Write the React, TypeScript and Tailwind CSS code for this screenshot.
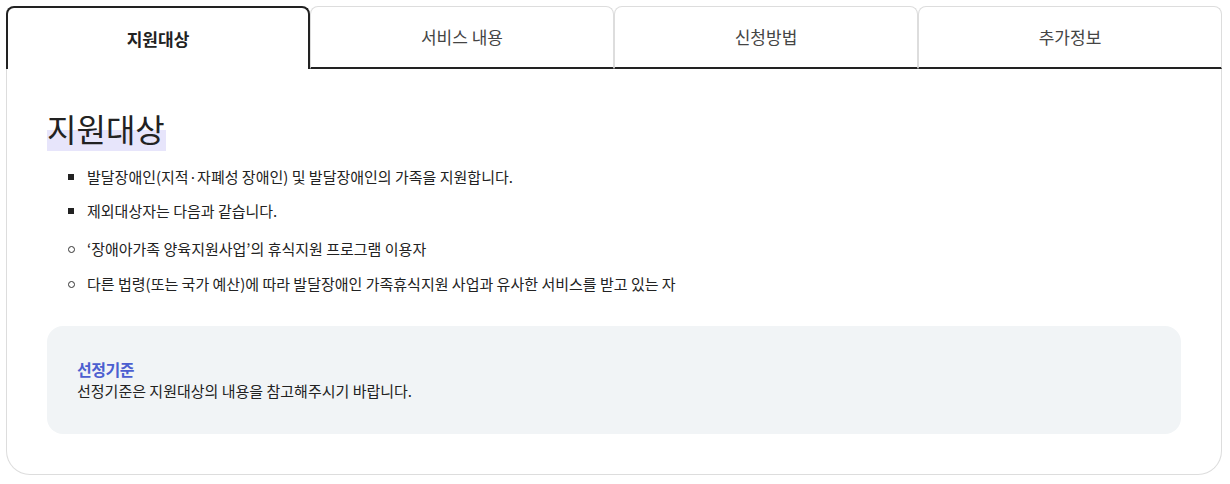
import React, { useState } from 'react';

const tabs = ['지원대상', '서비스 내용', '신청방법', '추가정보'];

const font = { fontFamily: '"Noto Sans CJK KR", "Noto Sans", sans-serif' };

const App: React.FC = () => {
  const [active, setActive] = useState(0);

  return (
    <div className="bg-white pt-[6px] pl-[6px]" style={font}>
      <div className="w-[1216px]">
        {/* tab bar */}
        <div className="grid grid-cols-4 h-[63px]">
          {tabs.map((t, i) =>
            i === active ? (
              <button
                key={t}
                onClick={() => setActive(i)}
                className="border-2 border-b-0 border-[#222] rounded-t-[8px] bg-white text-[17px] font-bold text-[#222]"
              >
                {t}
              </button>
            ) : (
              <button
                key={t}
                onClick={() => setActive(i)}
                className="border border-[#ddd] border-b-2 border-b-[#222] rounded-t-[8px] bg-white text-[17px] text-[#444]"
              >
                {t}
              </button>
            )
          )}
        </div>

        {/* panel */}
        <div className="border border-t-0 border-[#ddd] rounded-b-[24px] px-[40px] pt-[40px] pb-[40px]">
          <h2 className="text-[32px] leading-[38px] text-[#222]">
            <span className="bg-[linear-gradient(transparent_55%,#e7e5fb_55%)] pr-[1px]">지원대상</span>
          </h2>

          <ul className="mt-[19px] pl-[21px] text-[15px] text-[#222]">
            <li className="flex items-center h-[22px]">
              <span className="w-[6px] h-[6px] bg-[#222] mr-[13px] shrink-0" />
              발달장애인(지적·자폐성 장애인) 및 발달장애인의 가족을 지원합니다.
            </li>
            <li className="flex items-center h-[22px] mt-[12px]">
              <span className="w-[6px] h-[6px] bg-[#222] mr-[13px] shrink-0" />
              제외대상자는 다음과 같습니다.
            </li>
            <li className="flex items-center h-[22px] mt-[16px]">
              <span className="w-[7px] h-[7px] border border-[#333] rounded-full mr-[12px] shrink-0" />
              ‘장애아가족 양육지원사업’의 휴식지원 프로그램 이용자
            </li>
            <li className="flex items-center h-[22px] mt-[13px]">
              <span className="w-[7px] h-[7px] border border-[#333] rounded-full mr-[12px] shrink-0" />
              다른 법령(또는 국가 예산)에 따라 발달장애인 가족휴식지원 사업과 유사한 서비스를 받고 있는 자
            </li>
          </ul>

          <div className="mt-[31px] h-[108px] rounded-[16px] bg-[#f1f4f6] px-[30px] pt-[32px]">
            <p className="text-[16px] leading-[22px] font-bold text-[#4c5fd0] tracking-[-0.5px]">선정기준</p>
            <p className="text-[15px] leading-[22px] text-[#222]">
              선정기준은 지원대상의 내용을 참고해주시기 바랍니다.
            </p>
          </div>
        </div>
      </div>
    </div>
  );
};

export default App;
